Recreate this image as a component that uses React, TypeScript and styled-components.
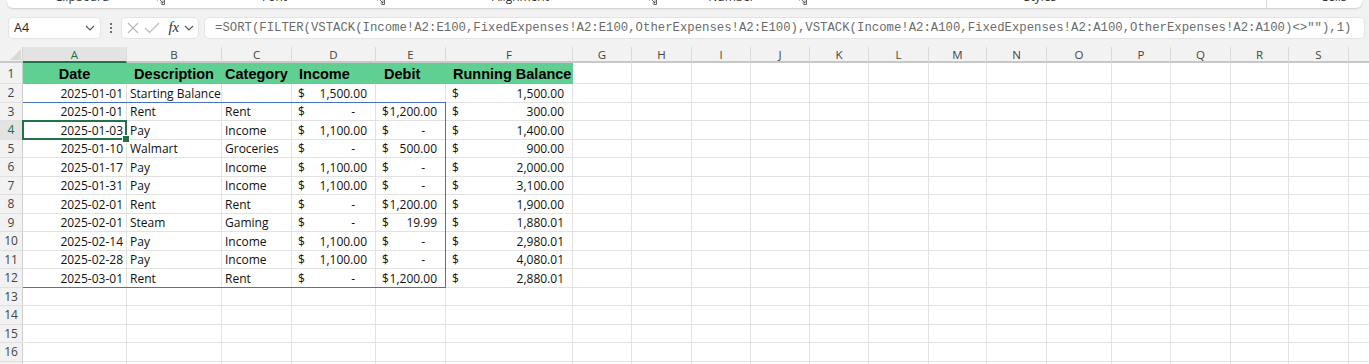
import React from 'react';
import styled, {createGlobalStyle} from 'styled-components';

const GlobalStyle = createGlobalStyle`
  html, body {
    margin: 0;
    padding: 0;
    background: #f2f2f2;
  }
  * {
    box-sizing: border-box;
  }
`

const Page = styled.div`
  width: 1369px;
  height: 364px;
  overflow: hidden;
  background: #f2f2f2;
  font-family: "Open Sans", "Noto Sans", sans-serif;
`

const Ribbon = styled.div`
  margin: 0 7px;
  height: 8px;
  background: #fff;
  border-radius: 0 0 6px 6px;
  box-shadow: 0 1px 2px rgba(0, 0, 0, 0.16);
  display: flex;
  overflow: hidden;
`

const RibbonGroup = styled.div<{$width: number; $sep?: boolean}>`
  flex: 0 0 ${p => p.$width}px;
  display: flex;
  align-items: flex-end;
  border-right: ${p => p.$sep ? '1px solid #d6d6d6' : 'none'};
`

const RibbonLabel = styled.div`
  flex: 1;
  text-align: center;
  font-size: 12px;
  line-height: 14px;
  margin-bottom: 4px;
  color: #333;
  white-space: nowrap;
`

const Launcher = styled.svg`
  width: 8px;
  height: 8px;
  margin: 0 7px 3px 0;
  flex: none;
`

const Toolbar = styled.div`
  height: 39px;
  display: flex;
  align-items: center;
  padding: 0 4px 0 8px;
`

const Box = styled.div`
  height: 22px;
  background: #fff;
  border: 1px solid #e4e4e4;
  border-radius: 5px;
  display: flex;
  align-items: center;
`

const NameBox = styled(Box)`
  width: 93px;
  padding: 0 5px;
  justify-content: space-between;
  font-size: 12.5px;
  color: #222;
`

const Dots = styled.div`
  width: 20px;
  display: flex;
  flex-direction: column;
  align-items: center;
  gap: 2px;
  span {
    width: 2px;
    height: 2px;
    border-radius: 50%;
    background: #444;
  }
`

const FxBox = styled(Box)`
  width: 78px;
  margin-right: 5px;
  padding: 0 4px 0 5px;
  justify-content: space-between;
`

const Fx = styled.i`
  font-family: "Liberation Serif", serif;
  font-size: 15px;
  color: #333;
  margin-left: 4px;
  line-height: 1;
`

const FormulaBox = styled(Box)`
  flex: 1;
  padding-left: 10px;
  font-family: "Liberation Mono", monospace;
  font-size: 12.3px;
  color: #6b6b6b;
  white-space: nowrap;
  overflow: hidden;
`

const WIDTHS = [104, 95, 70, 84, 70, 127, 59, 60, 59, 59, 59, 60, 58, 60, 65, 59, 60, 58, 60, 60]
const LETTERS = 'ABCDEFGHIJKLMNOPQRST'.split('')
const ROW_COUNT = 17
const GREEN = '#5fcf92'
const ACTIVE = {row: 4, col: 0}

const Sheet = styled.div`
  display: grid;
  grid-template-columns: 23px ${WIDTHS.map(w => w + 'px').join(' ')};
  grid-template-rows: 16px 21px repeat(${ROW_COUNT - 1}, 18.5px);
  background: #fff;
`

const Placed = styled.div<{$r: number; $c: number}>`
  grid-row: ${p => p.$r + 1};
  grid-column: ${p => p.$c + 1};
  min-width: 0;
`

const Corner = styled(Placed)`
  background: #f2f2f2;
  border-right: 1px solid #d4d4d4;
  border-bottom: 2px solid #c8c8c8;
  display: flex;
  align-items: flex-end;
  justify-content: flex-end;
  padding: 0 1px 1px 0;
`

const ColHead = styled(Placed)<{$active?: boolean}>`
  background: ${p => p.$active ? '#e3e3e3' : '#f2f2f2'};
  border-right: 1px solid #dadada;
  border-bottom: 2px solid ${p => p.$active ? '#217346' : '#c8c8c8'};
  color: ${p => p.$active ? '#217346' : '#444'};
  font-size: 11.5px;
  display: flex;
  align-items: center;
  justify-content: center;
`

const RowHead = styled(Placed)<{$active?: boolean}>`
  background: ${p => p.$active ? '#e3e3e3' : '#f2f2f2'};
  border-right: 1px solid #cfcfcf;
  border-bottom: 1px solid #e0e0e0;
  color: ${p => p.$active ? '#217346' : '#444'};
  font-size: 12px;
  display: flex;
  align-items: center;
  justify-content: center;
`

const Cell = styled(Placed)<{$fill?: string; $align?: string; $pad?: string}>`
  background: ${p => p.$fill || 'transparent'};
  border-right: 1px solid ${p => p.$fill || '#e2e2e2'};
  border-bottom: 1px solid ${p => p.$fill || '#e2e2e2'};
  display: flex;
  align-items: flex-end;
  justify-content: ${p => p.$align || 'flex-start'};
  padding: ${p => p.$pad || '0 3px'};
  font-size: 12px;
  line-height: 16px;
  color: #111;
  white-space: nowrap;
`

const HeadText = styled.span`
  font-family: "Liberation Sans", Arial, sans-serif;
  font-weight: 700;
  font-size: 14.5px;
  line-height: 17px;
  color: #000;
`

const Money = styled(Cell)<{$dash?: boolean}>`
  justify-content: space-between;
  padding: 0 ${p => p.$dash ? 20 : 8}px 0 6px;
`

const SpillBorder = styled.div`
  grid-row: 4 / 14;
  grid-column: 2 / 7;
  margin-top: -1px;
  border: 1px solid #4a72c4;
  border-left: none;
  pointer-events: none;
`

const ActiveCell = styled.div`
  grid-row: ${ACTIVE.row + 1};
  grid-column: 2;
  margin: -1px 0 0 -1px;
  border: 2px solid #217346;
  position: relative;
  pointer-events: none;
`

const FillHandle = styled.span`
  position: absolute;
  right: -4px;
  bottom: -4px;
  width: 6px;
  height: 6px;
  background: #217346;
  outline: 1px solid #fff;
`

type Entry = [string, string, string, number, number | null, number]

const ENTRIES: Entry[] = [
    ['2025-01-01', 'Starting Balance', '', 1500, null, 1500],
    ['2025-01-01', 'Rent', 'Rent', 0, 1200, 300],
    ['2025-01-03', 'Pay', 'Income', 1100, 0, 1400],
    ['2025-01-10', 'Walmart', 'Groceries', 0, 500, 900],
    ['2025-01-17', 'Pay', 'Income', 1100, 0, 2000],
    ['2025-01-31', 'Pay', 'Income', 1100, 0, 3100],
    ['2025-02-01', 'Rent', 'Rent', 0, 1200, 1900],
    ['2025-02-01', 'Steam', 'Gaming', 0, 19.99, 1880.01],
    ['2025-02-14', 'Pay', 'Income', 1100, 0, 2980.01],
    ['2025-02-28', 'Pay', 'Income', 1100, 0, 4080.01],
    ['2025-03-01', 'Rent', 'Rent', 0, 1200, 2880.01],
]

const HEADINGS: {text: string; align: string; pad: string}[] = [
    {text: 'Date', align: 'center', pad: '0'},
    {text: 'Description', align: 'center', pad: '0'},
    {text: 'Category', align: 'center', pad: '0'},
    {text: 'Income', align: 'flex-start', pad: '0 0 0 7px'},
    {text: 'Debit', align: 'flex-start', pad: '0 0 0 8px'},
    {text: 'Running Balance', align: 'flex-start', pad: '0 0 0 7px'},
]

const fmt = (n: number) => n.toLocaleString('en-US', {minimumFractionDigits: 2, maximumFractionDigits: 2})

const Chevron = () => (
    <svg width="10" height="6" viewBox="0 0 10 6">
        <polyline points="1,1 5,5 9,1" fill="none" stroke="#555" strokeWidth="1.1"/>
    </svg>
)

const LauncherIcon = () => (
    <Launcher viewBox="0 0 8 8">
        <path d="M0.5 3.5V0.5H7.5V7.5H4.5M2 2L6 6M6 3.5V6H3.5" fill="none" stroke="#555" strokeWidth="0.9"/>
    </Launcher>
)

const RIBBON = [
    {label: 'Clipboard', width: 165, launcher: true},
    {label: 'Font', width: 220, launcher: true},
    {label: 'Alignment', width: 272, launcher: true},
    {label: 'Number', width: 150, launcher: true},
    {label: 'Styles', width: 453, launcher: false, sep: true},
    {label: 'Cells', width: 133, launcher: false},
]

const renderRow = (r: number) => {
    const cells: React.ReactNode[] = []
    const entry = r >= 2 ? ENTRIES[r - 2] : undefined
    LETTERS.forEach((_, i) => {
        const c = i + 1
        const key = `${r}-${c}`
        if (r === 1 && i < HEADINGS.length) {
            const h = HEADINGS[i]
            cells.push(
                <Cell key={key} $r={r} $c={c} $fill={GREEN} $align={h.align} $pad={h.pad}>
                    <HeadText>{h.text}</HeadText>
                </Cell>
            )
            return
        }
        if (entry && i === 0) {
            cells.push(<Cell key={key} $r={r} $c={c} $align="flex-end">{entry[0]}</Cell>)
            return
        }
        if (entry && (i === 1 || i === 2)) {
            cells.push(<Cell key={key} $r={r} $c={c} $pad="0 2px 0 3px">{entry[i]}</Cell>)
            return
        }
        if (entry && i >= 3 && i <= 5) {
            const v = entry[i] as number | null
            if (v === null) {
                cells.push(<Cell key={key} $r={r} $c={c}/>)
                return
            }
            cells.push(
                <Money key={key} $r={r} $c={c} $dash={v === 0}>
                    <span>$</span>
                    <span>{v === 0 ? '-' : fmt(v)}</span>
                </Money>
            )
            return
        }
        cells.push(<Cell key={key} $r={r} $c={c}/>)
    })
    return cells
}

export default function App() {
    const rows = Array.from({length: ROW_COUNT}, (_, i) => i + 1)
    return (
        <Page>
            <GlobalStyle/>
            <Ribbon>
                {RIBBON.map(g => (
                    <RibbonGroup key={g.label} $width={g.width} $sep={g.sep}>
                        <RibbonLabel>{g.label}</RibbonLabel>
                        {g.launcher && <LauncherIcon/>}
                    </RibbonGroup>
                ))}
            </Ribbon>

            <Toolbar>
                <NameBox>
                    <span>A4</span>
                    <Chevron/>
                </NameBox>
                <Dots><span/><span/><span/></Dots>
                <FxBox>
                    <svg width="12" height="12" viewBox="0 0 12 12">
                        <path d="M1 1L11 11M11 1L1 11" stroke="#b8b8b8" strokeWidth="1.2"/>
                    </svg>
                    <svg width="16" height="12" viewBox="0 0 16 12">
                        <polyline points="1,6 5.5,10.5 15,1" fill="none" stroke="#b8b8b8" strokeWidth="1.2"/>
                    </svg>
                    <Fx>fx</Fx>
                    <Chevron/>
                </FxBox>
                <FormulaBox>
                    {'=SORT(FILTER(VSTACK(Income!A2:E100,FixedExpenses!A2:E100,OtherExpenses!A2:E100),VSTACK(Income!A2:A100,FixedExpenses!A2:A100,OtherExpenses!A2:A100)<>""),1)'}
                </FormulaBox>
            </Toolbar>

            <Sheet>
                <Corner $r={0} $c={0}>
                    <svg width="11" height="11" viewBox="0 0 11 11">
                        <polygon points="11,0 11,11 0,11" fill="#d9d9d9"/>
                    </svg>
                </Corner>
                {LETTERS.map((l, i) => (
                    <ColHead key={l} $r={0} $c={i + 1} $active={i === ACTIVE.col}>{l}</ColHead>
                ))}
                {rows.map(r => (
                    <React.Fragment key={r}>
                        <RowHead $r={r} $c={0} $active={r === ACTIVE.row}>{r}</RowHead>
                        {renderRow(r)}
                    </React.Fragment>
                ))}
                <SpillBorder/>
                <ActiveCell>
                    <FillHandle/>
                </ActiveCell>
            </Sheet>
        </Page>
    )
}
